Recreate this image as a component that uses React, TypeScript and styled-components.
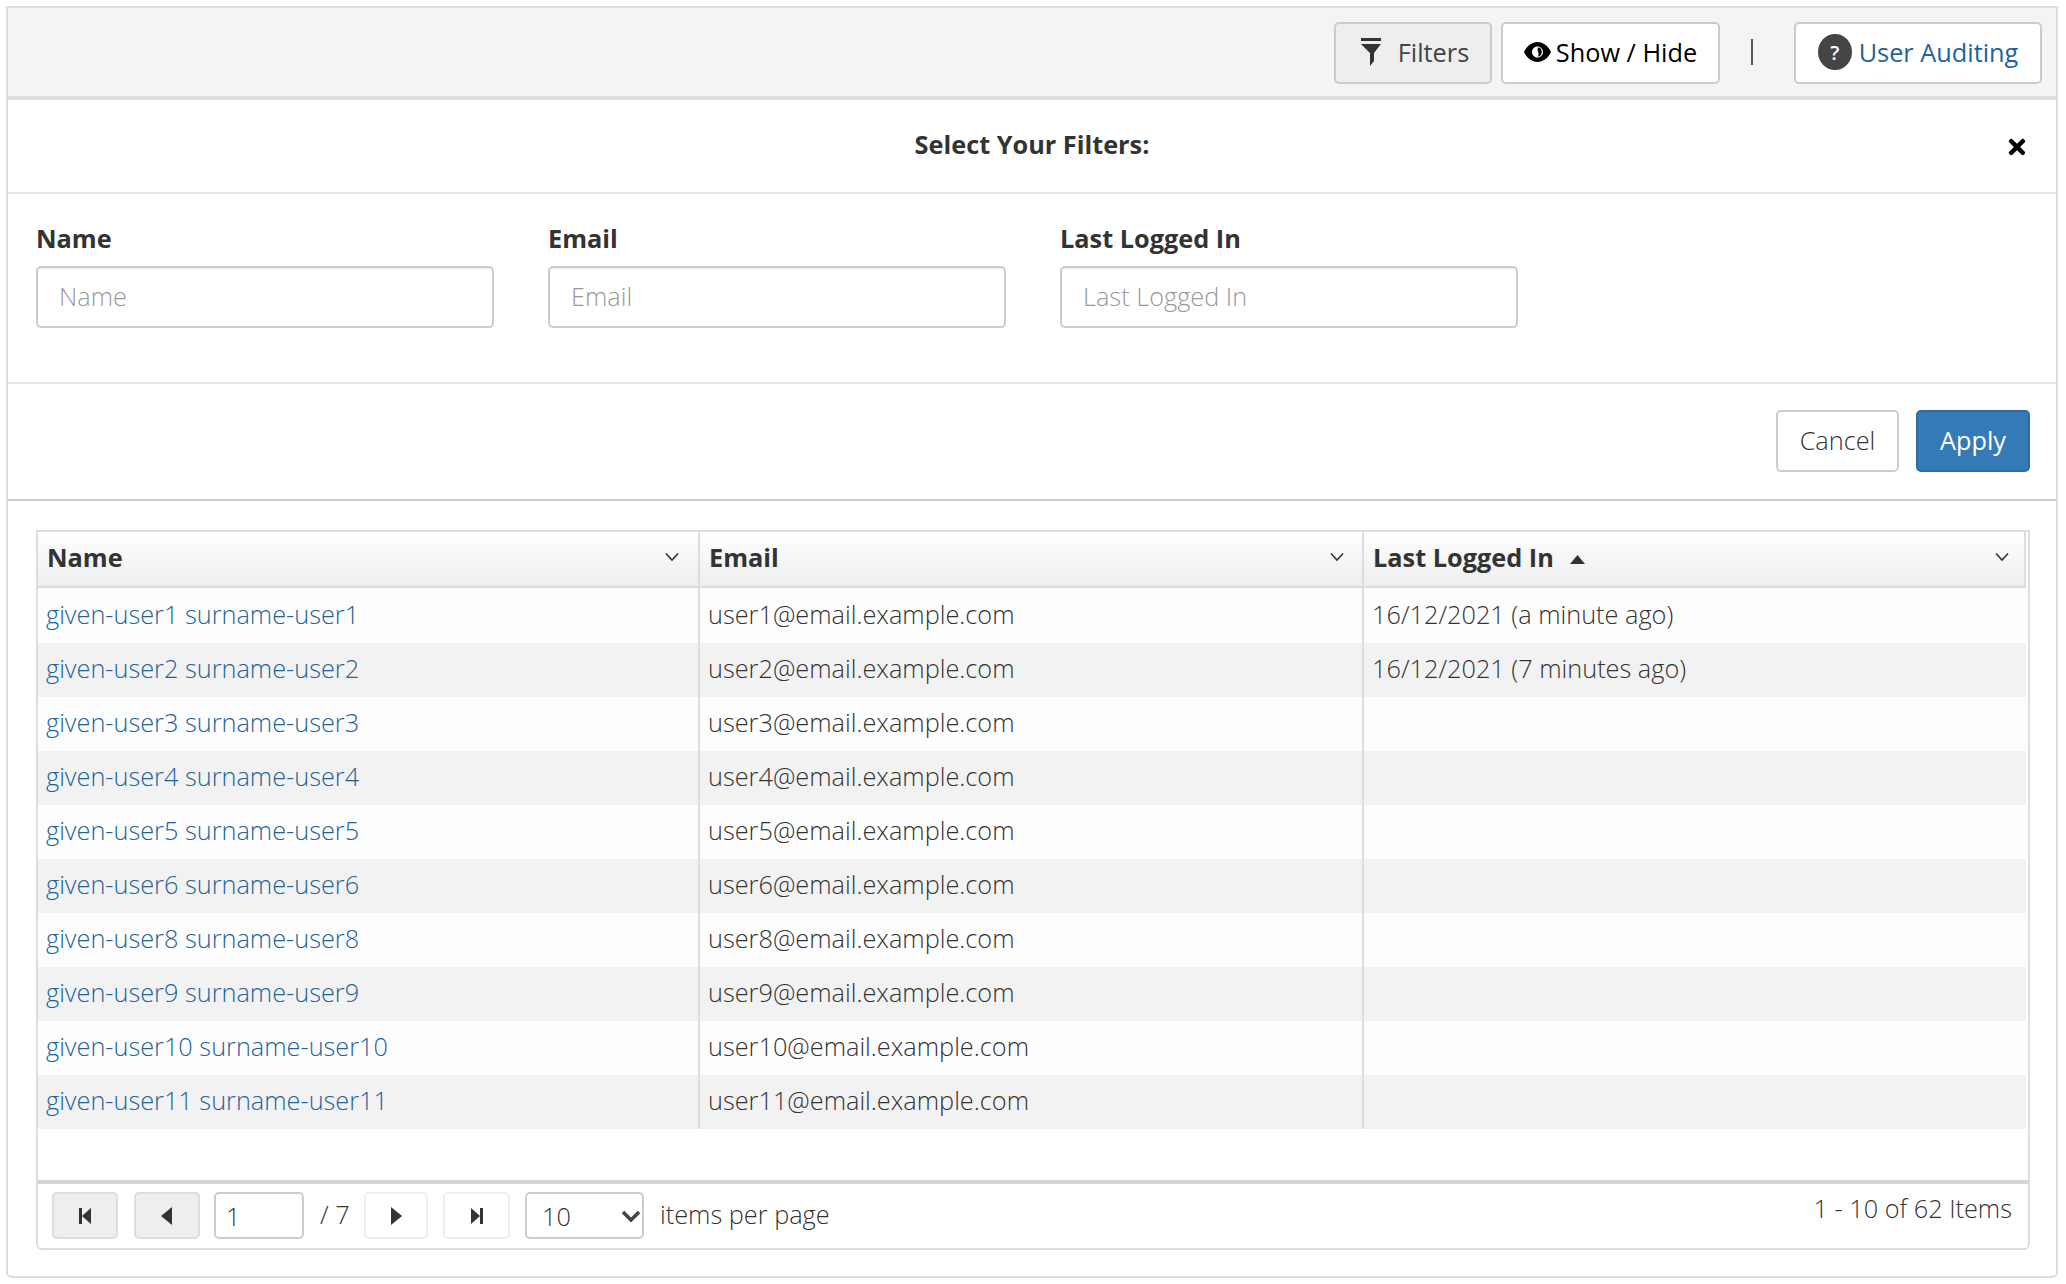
import React from "react";
import styled, { createGlobalStyle } from "styled-components";
import { FaTimes } from "react-icons/fa";

const GlobalStyle = createGlobalStyle`
  html, body {
    margin: 0;
    padding: 0;
    background: #fff;
    color: #333;
    font-family: "Open Sans", "Noto Sans", sans-serif;
    font-size: 25.3px;
    font-weight: 300;
  }
  * { box-sizing: border-box; }
`;

const Page = styled.div`
  width: 2066px;
  height: 1284px;
  padding: 6px 8px 6px 6px;
`;

const Panel = styled.div`
  height: 1272px;
  border: 2px solid #ddd;
  border-radius: 0 0 6px 6px;
  display: flex;
  flex-direction: column;
`;

const Toolbar = styled.div`
  height: 92px;
  flex: none;
  background: #f4f4f4;
  border-bottom: 4px solid #ddd;
  display: flex;
  align-items: flex-start;
  justify-content: flex-end;
  padding: 14px 14px 0 0;
`;

const ToolButton = styled.button<{ $active?: boolean; $width: number; $tone?: string; $flush?: boolean }>`
  width: ${(p) => p.$width}px;
  height: 62px;
  margin-left: ${(p) => (p.$flush ? 0 : 9)}px;
  padding: 0 0 2px;
  display: flex;
  align-items: center;
  justify-content: center;
  background: ${(p) => (p.$active ? "#eee" : "#fff")};
  border: 2px solid #ccc;
  border-radius: 5px;
  color: ${(p) => p.$tone ?? "#444"};
  font: inherit;
  font-weight: 400;
`;

const ToolDivider = styled.span`
  width: 2px;
  height: 26px;
  margin: 17px 41px 0 31px;
  background: #555;
`;

const FilterIcon = styled.svg`
  width: 24px;
  height: 28px;
  margin-left: 2px;
  margin-right: 15px;
  fill: #333;
`;

const EyeIcon = styled.svg`
  width: 27px;
  height: 24px;
  margin-right: 5px;
  fill: #000;
`;

const HelpBadge = styled.span`
  width: 34px;
  height: 36px;
  border-radius: 50%;
  background: #444;
  color: #fff;
  margin-right: 7px;
  display: flex;
  align-items: center;
  justify-content: center;
  font-size: 20px;
  font-weight: 600;
`;

const TitleBar = styled.div`
  height: 94px;
  flex: none;
  border-bottom: 2px solid #e5e5e5;
  position: relative;
  display: flex;
  align-items: center;
  justify-content: center;
`;

const Title = styled.h2`
  margin: 0 0 4px;
  font-size: 25.3px;
  font-weight: 700;
`;

const CloseIcon = styled(FaTimes)`
  position: absolute;
  right: 29px;
  top: 35px;
  width: 20px;
  height: 24px;
  color: #000;
`;

const FilterForm = styled.div`
  height: 190px;
  flex: none;
  border-bottom: 2px solid #e5e5e5;
  padding: 27px 0 0 28px;
  display: flex;
  gap: 54px;
`;

const Field = styled.label`
  width: 458px;
  display: flex;
  flex-direction: column;
`;

const FieldLabel = styled.span`
  height: 45px;
  line-height: 34px;
  font-weight: 700;
`;

const TextInput = styled.input`
  width: 100%;
  height: 62px;
  padding: 0 21px 2px;
  border: 2px solid #ccc;
  border-radius: 5px;
  box-shadow: inset 0 1px 1px rgba(0, 0, 0, 0.075);
  font: inherit;
  color: #333;
  background: #fff;
  &::placeholder {
    color: #999;
    opacity: 1;
  }
`;

const Actions = styled.div`
  height: 117px;
  flex: none;
  border-bottom: 2px solid #ccc;
  padding: 26px 26px 0 0;
  display: flex;
  justify-content: flex-end;
  align-items: flex-start;
  gap: 17px;
`;

const ActionButton = styled.button<{ $primary?: boolean; $width: number }>`
  width: ${(p) => p.$width}px;
  height: 62px;
  padding: 0 0 2px;
  border: 2px solid ${(p) => (p.$primary ? "#2e6da4" : "#ccc")};
  border-radius: 5px;
  background: ${(p) => (p.$primary ? "#337ab7" : "#fff")};
  color: ${(p) => (p.$primary ? "#fff" : "#333")};
  font: inherit;
  font-weight: ${(p) => (p.$primary ? 400 : 300)};
`;

const TableArea = styled.div`
  flex: 1;
  padding: 29px 26px 26px 28px;
  display: flex;
  min-height: 0;
`;

const Grid = styled.div`
  flex: 1;
  border: 2px solid #ddd;
  border-radius: 0 0 6px 6px;
  display: flex;
  flex-direction: column;
`;

const columns = "660px 2px 662px 2px 1fr";

const HeadRow = styled.div`
  height: 56px;
  flex: none;
  display: grid;
  grid-template-columns: ${columns};
  background: linear-gradient(#fff, #eee);
  border-bottom: 2px solid #ddd;
  margin-right: 2px;
  border-right: 2px solid #ddd;
`;

const HeadCell = styled.div`
  display: flex;
  align-items: center;
  padding: 0 17px 4px 9px;
  font-weight: 700;
  color: #333;
  &:first-child {
    padding-right: 18px;
  }
  &:last-child {
    padding-right: 14px;
  }
`;

const HeadLabel = styled.span`
  flex: 1;
  display: flex;
  align-items: center;
  gap: 16px;
`;

const SortArrow = styled.svg`
  width: 15px;
  height: 9px;
  margin-top: 4px;
  fill: #333;
`;

const Chevron = styled.svg`
  width: 16px;
  height: 10px;
  fill: none;
  stroke: #333;
  stroke-width: 1.6;
`;

const Rule = styled.div`
  background: #ddd;
`;

const Body = styled.div`
  flex: 1;
  margin-right: 2px;
`;

const Cell = styled.div`
  display: flex;
  align-items: center;
  padding-left: 8px;
  white-space: nowrap;
  padding-bottom: 5px;
`;

const Row = styled.div<{ $odd: boolean }>`
  height: 54px;
  display: grid;
  grid-template-columns: ${columns};
  background: ${(p) => (p.$odd ? "#f2f2f2" : "#fdfdfd")};
  &:first-child {
    height: 55px;
  }
  &:first-child ${Cell} {
    padding-bottom: 3px;
  }
`;

const NameLink = styled.a`
  color: #23639b;
  text-decoration: none;
`;

const Pager = styled.div`
  height: 68px;
  flex: none;
  border-top: 4px solid #d4d4d4;
  display: flex;
  align-items: flex-start;
  padding: 8px 16px 0 14px;
  position: relative;
`;

const PageButton = styled.button<{ $disabled?: boolean; $width: number; $gap: number }>`
  width: ${(p) => p.$width}px;
  height: 47px;
  margin-right: ${(p) => p.$gap}px;
  padding: 0;
  flex: none;
  background: ${(p) => (p.$disabled ? "#eee" : "#fff")};
  border: 2px solid ${(p) => (p.$disabled ? "#ddd" : "#eee")};
  border-radius: 5px;
  display: flex;
  align-items: center;
  justify-content: center;
`;

const PagerIcon = styled.svg`
  width: 18px;
  height: 20px;
  fill: #333;
`;

const PageInput = styled.input`
  width: 90px;
  height: 47px;
  flex: none;
  padding: 1px 10px 0;
  border: 2px solid #ccc;
  border-radius: 5px;
  font: inherit;
  color: #333;
  background: #fff;
`;

const PageTotal = styled.span`
  width: 60px;
  flex: none;
  padding-left: 16px;
  line-height: 44px;
  white-space: nowrap;
`;

const SizeSelectWrap = styled.div`
  width: 119px;
  height: 47px;
  flex: none;
  position: relative;
  margin-right: 16px;
`;

const SizeSelect = styled.select`
  width: 100%;
  height: 100%;
  appearance: none;
  padding: 1px 0 0 15px;
  border: 2px solid #ccc;
  border-radius: 5px;
  font: inherit;
  color: #333;
  background: #fff;
`;

const SelectArrow = styled.svg`
  position: absolute;
  right: 3px;
  top: 18px;
  width: 20px;
  height: 13px;
  fill: none;
  stroke: #444;
  stroke-width: 3.6;
`;

const PerPage = styled.span`
  line-height: 45px;
  white-space: nowrap;
`;

const ItemCount = styled.span`
  margin-left: auto;
  line-height: 33px;
  white-space: nowrap;
`;

const users = [1, 2, 3, 4, 5, 6, 8, 9, 10, 11];
const lastLogged: Record<number, string> = {
  1: "16/12/2021 (a minute ago)",
  2: "16/12/2021 (7 minutes ago)",
};

const ColumnChevron = () => (
  <Chevron viewBox="0 0 16 10">
    <polyline points="2,1.5 8,8 14,1.5" />
  </Chevron>
);

export default function App() {
  return (
    <Page>
      <GlobalStyle />
      <Panel>
        <Toolbar>
          <ToolButton $active $width={158}>
            <FilterIcon viewBox="0 0 24 28">
              <rect x="2" y="0" width="20" height="3" />
              <path d="M2 6h20l-7 9v8l-4 5v-13z" />
            </FilterIcon>
            Filters
          </ToolButton>
          <ToolButton $width={219} $tone="#000">
            <EyeIcon viewBox="0 0 27 24">
              <path
                fillRule="evenodd"
                d="M13.5 2C20 2 25 7.5 27 12c-2 4.500-7 10-13.500 10S2 16.500 0 12C2 7.500 7 2 13.500 2zM13.500 6.500C10.300 6.500 8 9 8 12s2.300 5.500 5.500 5.500S19 15 19 12s-2.300-5.500-5.500-5.500z"
              />
              <path d="M14 7.500c2.400 0 3.800 2 3.800 4.500s-1.800 4.600-4 4.600c1-1.600 1-3 .4-4.600-.6-1.500-.8-3 -.2-4.500z" />
            </EyeIcon>
            Show / Hide
          </ToolButton>
          <ToolDivider />
          <ToolButton $width={248} $tone="#23639b" $flush>
            <HelpBadge>?</HelpBadge>
            User Auditing
          </ToolButton>
        </Toolbar>

        <TitleBar>
          <Title>Select Your Filters:</Title>
          <CloseIcon />
        </TitleBar>

        <FilterForm>
          {["Name", "Email", "Last Logged In"].map((name) => (
            <Field key={name}>
              <FieldLabel>{name}</FieldLabel>
              <TextInput placeholder={name} />
            </Field>
          ))}
        </FilterForm>

        <Actions>
          <ActionButton $width={123}>Cancel</ActionButton>
          <ActionButton $primary $width={114}>Apply</ActionButton>
        </Actions>

        <TableArea>
          <Grid>
            <HeadRow>
              <HeadCell>
                <HeadLabel>Name</HeadLabel>
                <ColumnChevron />
              </HeadCell>
              <Rule />
              <HeadCell>
                <HeadLabel>Email</HeadLabel>
                <ColumnChevron />
              </HeadCell>
              <Rule />
              <HeadCell>
                <HeadLabel>
                  Last Logged In
                  <SortArrow viewBox="0 0 15 9">
                    <path d="M7.5 0L15 9H0z" />
                  </SortArrow>
                </HeadLabel>
                <ColumnChevron />
              </HeadCell>
            </HeadRow>

            <Body>
              {users.map((n, i) => (
                <Row key={n} $odd={i % 2 === 1}>
                  <Cell>
                    <NameLink href="#">{`given-user${n} surname-user${n}`}</NameLink>
                  </Cell>
                  <Rule />
                  <Cell>{`user${n}@email.example.com`}</Cell>
                  <Rule />
                  <Cell>{lastLogged[n] ?? ""}</Cell>
                </Row>
              ))}
            </Body>

            <Pager>
              <PageButton $disabled $width={66} $gap={16}>
                <PagerIcon viewBox="0 0 18 20">
                  <path d="M3 2h3v16H3zM15 2v16L6 10z" />
                </PagerIcon>
              </PageButton>
              <PageButton $disabled $width={66} $gap={14}>
                <PagerIcon viewBox="0 0 18 20">
                  <path d="M14 1v18L3 10z" />
                </PagerIcon>
              </PageButton>
              <PageInput defaultValue="1" />
              <PageTotal>/ 7</PageTotal>
              <PageButton $width={64} $gap={15}>
                <PagerIcon viewBox="0 0 18 20">
                  <path d="M4 1v18l11-9z" />
                </PagerIcon>
              </PageButton>
              <PageButton $width={67} $gap={15}>
                <PagerIcon viewBox="0 0 18 20">
                  <path d="M12 2h3v16h-3zM3 2v16l9-8z" />
                </PagerIcon>
              </PageButton>
              <SizeSelectWrap>
                <SizeSelect defaultValue="10">
                  <option value="10">10</option>
                  <option value="25">25</option>
                </SizeSelect>
                <SelectArrow viewBox="0 0 20 13">
                  <polyline points="2,2 10,10 18,2" />
                </SelectArrow>
              </SizeSelectWrap>
              <PerPage>items per page</PerPage>
              <ItemCount>1 - 10 of 62 Items</ItemCount>
            </Pager>
          </Grid>
        </TableArea>
      </Panel>
    </Page>
  );
}
